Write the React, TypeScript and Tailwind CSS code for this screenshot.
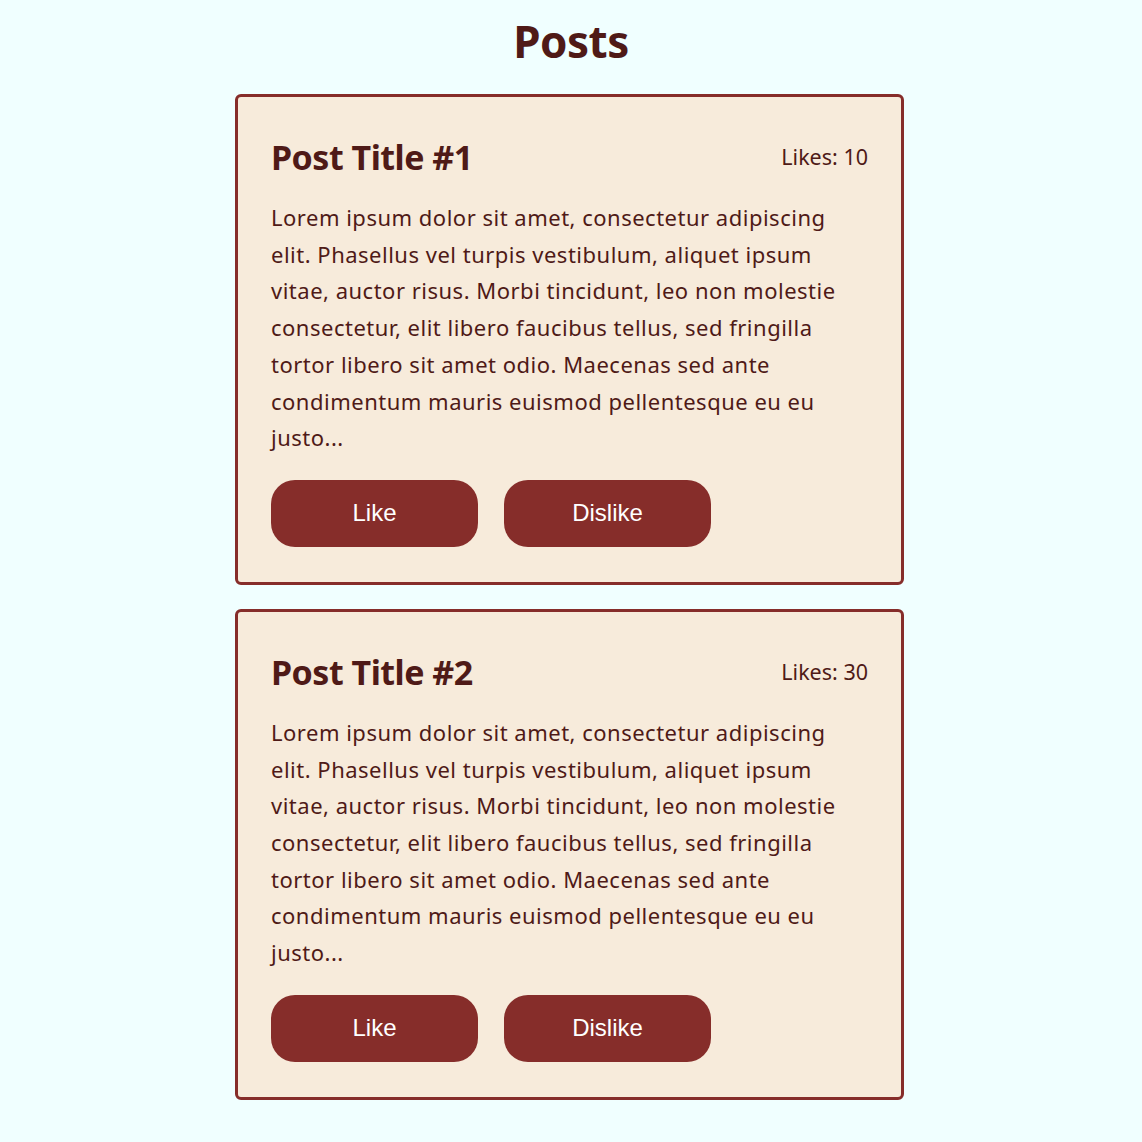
import React from 'react';

interface PostProps {
  title: string;
  likes: number;
  body: string;
}

const lorem =
  'Lorem ipsum dolor sit amet, consectetur adipiscing elit. Phasellus vel turpis vestibulum, aliquet ipsum vitae, auctor risus. Morbi tincidunt, leo non molestie consectetur, elit libero faucibus tellus, sed fringilla tortor libero sit amet odio. Maecenas sed ante condimentum mauris euismod pellentesque eu eu justo...';

const PostCard: React.FC<PostProps> = ({ title, likes, body }) => {
  return (
    <div className="w-[669px] rounded-[6px] border-[3px] border-[#862d2a] bg-[#f7ebdb] px-[33px] pt-[33px] pb-[35px]">
      <div className="flex items-center justify-between h-[54px]">
        <h2 className="text-[34px] font-bold text-[#4f1a17] leading-[54px] tracking-[-0.5px]">{title}</h2>
        <span className="text-[21.5px] text-[#4f1a17]">Likes: {likes}</span>
      </div>
      <p className="mt-[15px] w-[580px] text-[22px] tracking-[0.5px] leading-[36.7px] text-[#4f1a17]">{body}</p>
      <div className="mt-[24px] flex gap-[26px]">
        <button className="w-[207px] h-[67px] rounded-[24px] bg-[#862d2a] text-white text-[24px] font-['Liberation_Sans',Arial,sans-serif]">
          Like
        </button>
        <button className="w-[207px] h-[67px] rounded-[24px] bg-[#862d2a] text-white text-[24px] font-['Liberation_Sans',Arial,sans-serif]">
          Dislike
        </button>
      </div>
    </div>
  );
};

const App: React.FC = () => {
  return (
    <div className="min-h-screen bg-[#f0ffff] font-['Noto_Sans',sans-serif] pt-[15px] pb-[40px]">
      <h1 className="text-center text-[44px] font-bold leading-[53px] text-[#4f1a17] tracking-[-0.5px]">Posts</h1>
      <div className="mt-[26px] flex flex-col items-center gap-[24px] pr-[3px]">
        <PostCard title="Post Title #1" likes={10} body={lorem} />
        <PostCard title="Post Title #2" likes={30} body={lorem} />
      </div>
    </div>
  );
};

export default App;
